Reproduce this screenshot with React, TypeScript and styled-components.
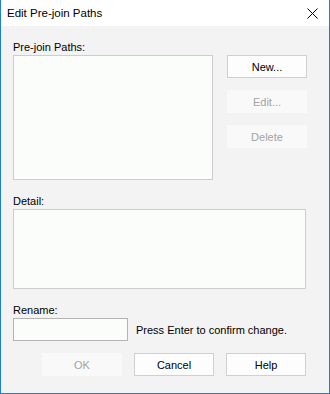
import styled, { createGlobalStyle } from "styled-components";

const GlobalStyle = createGlobalStyle`
  html, body {
    margin: 0;
    padding: 0;
    background: #ffffff;
  }
  * {
    box-sizing: border-box;
  }
`;

const Window = styled.div`
  width: 330px;
  height: 394px;
  border: 1px solid #1c7ed6;
  border-top: none;
  background: #f3f3f3;
  display: flex;
  flex-direction: column;
  font-family: "Liberation Sans", Arial, sans-serif;
  font-size: 11px;
  color: #000;
`;

const TitleBar = styled.div`
  height: 26px;
  background: #ffffff;
  display: flex;
  align-items: center;
  justify-content: space-between;
  padding-left: 6px;
`;

const Title = styled.span`
  font-size: 11.5px;
  color: #000;
`;

const CloseBox = styled.div`
  width: 34px;
  height: 26px;
  display: flex;
  align-items: center;
  justify-content: center;
`;

const Body = styled.div`
  flex: 1;
  padding: 13px 23px 0 12px;
  display: flex;
  flex-direction: column;
`;

const Label = styled.div`
  height: 16px;
  line-height: 16px;
`;

const TopRow = styled.div`
  display: grid;
  grid-template-columns: 200px 80px;
  column-gap: 14px;
  margin-bottom: 13px;
`;

const Field = styled.div<{ $h: number }>`
  height: ${(p) => p.$h}px;
  background: #fbfdfb;
  border: 1px solid #cdcdcd;
`;

const SideButtons = styled.div`
  display: flex;
  flex-direction: column;
  gap: 12px;
`;

const Button = styled.div<{ $disabled?: boolean }>`
  width: 80px;
  height: 23px;
  display: flex;
  align-items: center;
  justify-content: center;
  background: ${(p) => (p.$disabled ? "#f9f9f9" : "#fdfdfd")};
  border: 1px solid ${(p) => (p.$disabled ? "#f9f9f9" : "#d0d0d0")};
  color: ${(p) => (p.$disabled ? "#a3a3a3" : "#000")};
`;

const Section = styled.div`
  margin-bottom: 13px;
`;

const RenameRow = styled.div`
  display: flex;
  align-items: center;
  gap: 8px;
  margin-bottom: 12px;
`;

const RenameInput = styled.div`
  width: 115px;
  height: 23px;
  background: #fbfdfb;
  border: 1px solid #b4b4b4;
`;

const Footer = styled.div`
  display: flex;
  justify-content: flex-end;
  gap: 12px;
`;

const CloseIcon = () => (
  <svg width="11" height="11" viewBox="0 0 11 11">
    <path d="M0.5 0.5 L10.5 10.5 M10.5 0.5 L0.5 10.5" stroke="#000" strokeWidth="1" />
  </svg>
);

export default function App() {
  return (
    <>
      <GlobalStyle />
      <Window>
        <TitleBar>
          <Title>Edit Pre-join Paths</Title>
          <CloseBox>
            <CloseIcon />
          </CloseBox>
        </TitleBar>
        <Body>
          <Label>Pre-join Paths:</Label>
          <TopRow>
            <Field $h={125} />
            <SideButtons>
              <Button>New...</Button>
              <Button $disabled>Edit...</Button>
              <Button $disabled>Delete</Button>
            </SideButtons>
          </TopRow>
          <Section>
            <Label>Detail:</Label>
            <Field $h={80} />
          </Section>
          <Label>Rename:</Label>
          <RenameRow>
            <RenameInput />
            <span>Press Enter to confirm change.</span>
          </RenameRow>
          <Footer>
            <Button $disabled>OK</Button>
            <Button>Cancel</Button>
            <Button>Help</Button>
          </Footer>
        </Body>
      </Window>
    </>
  );
}
